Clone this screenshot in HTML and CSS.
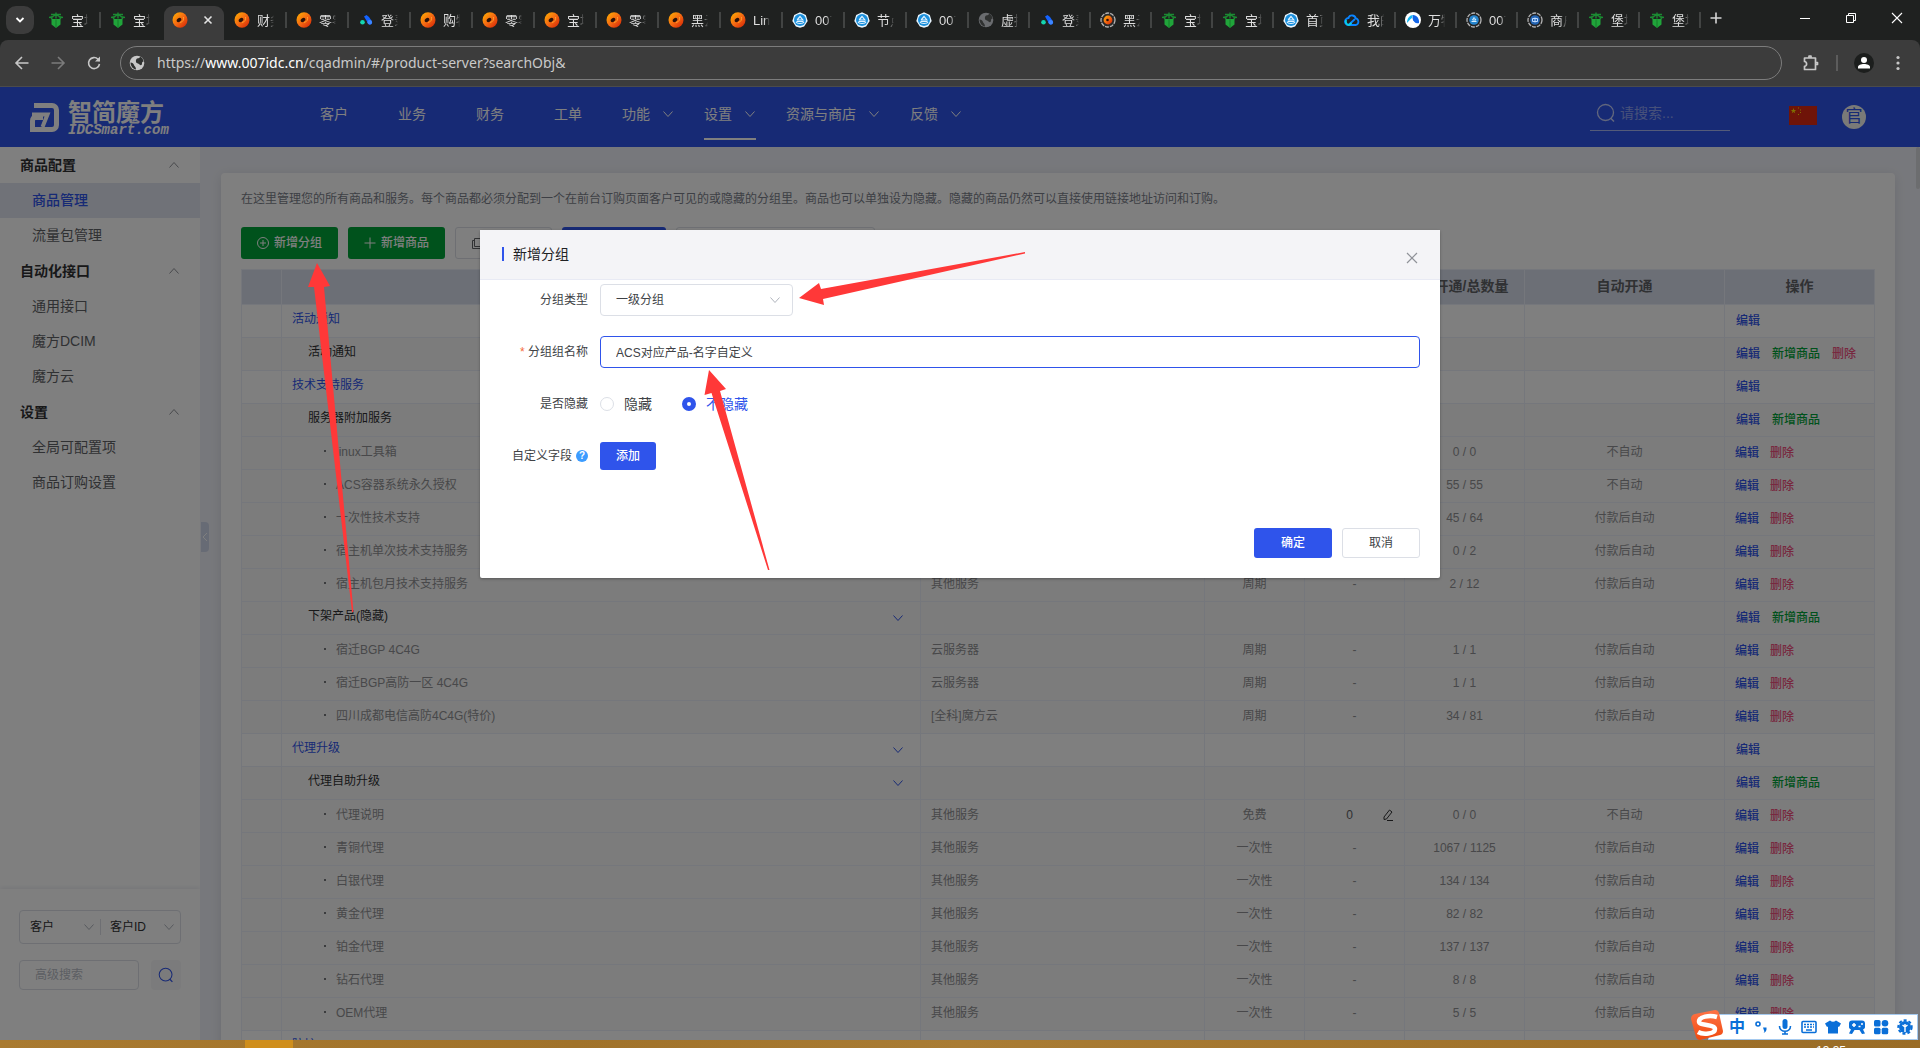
FILE: index.html
```html
<!DOCTYPE html>
<html lang="zh-CN">
<head>
<meta charset="utf-8">
<title>商品管理</title>
<link rel="stylesheet" href="styles.css">
</head>
<body>
<svg class="defs" aria-hidden="true">
  <defs>
    <linearGradient id="og" x1="0" y1="0" x2="1" y2="1"><stop offset="0" stop-color="#ffb400"/><stop offset=".5" stop-color="#f56a12"/><stop offset="1" stop-color="#d01f05"/></linearGradient>
    <linearGradient id="sg" x1="0" y1="0" x2="0" y2="1"><stop offset="0" stop-color="#ff7346"/><stop offset="1" stop-color="#f04a10"/></linearGradient>
  </defs>
  <symbol id="bt" viewBox="0 0 16 16"><path d="M3.500 7h9v5.500L8 16l-4.500-3.500z" fill="#20a53a"/><path d="M8 7.500v8" stroke="#167a2a"/><path d="M1 5.500C3 5.500 5 5 8 2.500c3 2.500 5 3 7 3M3 2.500h10M8 .5v6M3 7l2-2M13 7l-2-2" stroke="#1b8a32" stroke-width="1.400" fill="none"/></symbol>
  <symbol id="orb" viewBox="0 0 16 16"><ellipse cx="8" cy="8" rx="7.500" ry="7.800" fill="url(#og)"/><ellipse cx="7" cy="8" rx="2.600" ry="1.900" transform="rotate(-35 7 8)" fill="#2a1208"/><path d="M8 10.500c3-.5 4-3 3.500-5.500" stroke="#ffa02a" fill="none"/></symbol>
  <symbol id="tri" viewBox="0 0 16 16"><path d="M6 4.500L8.500 3 11 5l3 4.500a2.200 2.200 0 0 1-3.500 2.500z" fill="#1463ff"/><circle cx="11.700" cy="10.300" r="2.300" fill="#3e86ff"/><circle cx="4.500" cy="10.300" r="2.300" fill="#13d6b0"/></symbol>
  <symbol id="hex" viewBox="0 0 16 16"><path d="M8 .3l5.800 2.600 1.900 6-3.600 5.700-4.100 1.200-4.100-1.200L.3 8.900l1.900-6z" fill="#e9f6ff"/><circle cx="8" cy="8" r="6" fill="#1a8fdc"/><path d="M4 10c1 2 7 2 8 0M4.500 9.500h7M5.500 7.500l2.500-3 2.800 3.500H5.500z" stroke="#dff2ff" stroke-width="1.200" fill="none"/></symbol>
  <symbol id="globe" viewBox="0 0 16 16"><circle cx="8" cy="8" r="7.300" fill="currentColor"/><path d="M8 3.500c2 0 3-.8 3-2 2 1 3.300 2.700 3.600 5-1 0-1.600.8-1.600 2 0 2-1.500 2-2.500 1-1-1.200-3.500-1-3.500-2.500S6.500 5 8 3.500zM1.500 7.500c2 0 3 1 3.500 2.500s2 1.500 2 4.500c-3-.5-5.500-3.500-5.500-7z" fill="#2f3130"/></symbol>
  <symbol id="ringo" viewBox="0 0 16 16"><circle cx="8" cy="8" r="7" fill="#2a2a2a" stroke="#b5b5b5" stroke-width="1.300" stroke-dasharray="4 1"/><circle cx="8" cy="8" r="4.400" fill="url(#og)"/><circle cx="7.500" cy="8" r="1.300" fill="#2a1208"/></symbol>
  <symbol id="ringb" viewBox="0 0 16 16"><circle cx="8" cy="8" r="7" fill="#222" stroke="#b5b5b5" stroke-width="1.300" stroke-dasharray="4 1"/><circle cx="8" cy="8" r="4.800" fill="#2686cf"/><path d="M5.500 9.500h5M6.500 8L8 5.500 10 8z" stroke="#d8efff" fill="none"/></symbol>
  <symbol id="ringc" viewBox="0 0 16 16"><circle cx="8" cy="8" r="7" fill="#222" stroke="#b5b5b5" stroke-width="1.300" stroke-dasharray="4 1"/><circle cx="8" cy="8" r="4.800" fill="#2465b4"/><path d="M5.500 6.500h5v3h-5zM8 5.500v5" stroke="#bcd9ff" fill="none"/></symbol>
  <symbol id="cloud" viewBox="0 0 16 16"><path d="M5 13a3.500 3.500 0 1 1 .5-6.800M4.500 13L11 7M4.500 5.500a4 4 0 0 1 7.300.8A3.500 3.500 0 0 1 12 13H5.500" stroke="#0a84ff" stroke-width="1.800" fill="none"/><path d="M2.300 8A3.300 3.300 0 0 0 5 13l2.500-2" stroke="#08d1e6" stroke-width="1.800" fill="none"/></symbol>
  <symbol id="wan" viewBox="0 0 16 16"><circle cx="8" cy="8" r="8" fill="#fff"/><path d="M2 11C2 6 5 3 8 3l-1 3C5 7 4 9 2 11z" fill="#15b8f5"/><path d="M8 3c4 0 6.500 4 6 8-3 1-6-1-6.500-5z" fill="#1264e8"/></symbol>
  <symbol id="down" viewBox="0 0 12 12"><path d="M1.500 3.500L6 8.500l4.500-5" fill="none" stroke="currentColor"/></symbol>
  <symbol id="up" viewBox="0 0 12 12"><path d="M1.500 8.500L6 3.500l4.500 5" fill="none" stroke="currentColor"/></symbol>
  <symbol id="find" viewBox="0 0 20 20"><circle cx="9.500" cy="9.500" r="8" fill="none" stroke="currentColor" stroke-width="1.300"/><path d="M14.500 15l3.500 3.500" stroke="currentColor" stroke-width="1.500"/></symbol>
</svg>

<div class="browser">
  <header class="strip">
    <button class="tabsearch" aria-label="搜索标签页"><svg viewBox="0 0 12 12" width="12" height="12"><path d="M2.500 4L6 7.500 9.500 4" fill="none" stroke="#fff" stroke-width="1.800"/></svg></button>
    <nav class="tabs">
      <a class="tab" href="#"><svg class="fav"><use href="#bt"/></svg><span>宝塔</span></a>
      <a class="tab nosep" href="#"><svg class="fav"><use href="#bt"/></svg><span>宝塔</span></a>
      <a class="tab active" href="#"><svg class="fav"><use href="#orb"/></svg><svg class="tabx" viewBox="0 0 10 10"><path d="M1.500 1.500l7 7m0-7l-7 7" stroke="#e3e3e3" stroke-width="1.600"/></svg></a>
      <a class="tab" href="#"><svg class="fav"><use href="#orb"/></svg><span>财务</span></a>
      <a class="tab" href="#"><svg class="fav"><use href="#orb"/></svg><span>零零</span></a>
      <a class="tab" href="#"><svg class="fav"><use href="#tri"/></svg><span>登录</span></a>
      <a class="tab" href="#"><svg class="fav"><use href="#orb"/></svg><span>购物</span></a>
      <a class="tab" href="#"><svg class="fav"><use href="#orb"/></svg><span>零零</span></a>
      <a class="tab" href="#"><svg class="fav"><use href="#orb"/></svg><span>宝塔</span></a>
      <a class="tab" href="#"><svg class="fav"><use href="#orb"/></svg><span>零零</span></a>
      <a class="tab" href="#"><svg class="fav"><use href="#orb"/></svg><span>黑云</span></a>
      <a class="tab" href="#"><svg class="fav"><use href="#orb"/></svg><span>Lin</span></a>
      <a class="tab" href="#"><svg class="fav"><use href="#hex"/></svg><span>007</span></a>
      <a class="tab" href="#"><svg class="fav"><use href="#hex"/></svg><span>节点</span></a>
      <a class="tab" href="#"><svg class="fav"><use href="#hex"/></svg><span>007</span></a>
      <a class="tab" href="#"><svg class="fav dim"><use href="#globe"/></svg><span>虚拟</span></a>
      <a class="tab" href="#"><svg class="fav"><use href="#tri"/></svg><span>登录</span></a>
      <a class="tab" href="#"><svg class="fav"><use href="#ringo"/></svg><span>黑云</span></a>
      <a class="tab" href="#"><svg class="fav"><use href="#bt"/></svg><span>宝塔</span></a>
      <a class="tab" href="#"><svg class="fav"><use href="#bt"/></svg><span>宝塔</span></a>
      <a class="tab" href="#"><svg class="fav"><use href="#hex"/></svg><span>首页</span></a>
      <a class="tab" href="#"><svg class="fav"><use href="#cloud"/></svg><span>我的</span></a>
      <a class="tab" href="#"><svg class="fav"><use href="#wan"/></svg><span>万物</span></a>
      <a class="tab" href="#"><svg class="fav"><use href="#ringb"/></svg><span>007</span></a>
      <a class="tab" href="#"><svg class="fav"><use href="#ringc"/></svg><span>商户</span></a>
      <a class="tab" href="#"><svg class="fav"><use href="#bt"/></svg><span>堡塔</span></a>
      <a class="tab" href="#"><svg class="fav"><use href="#bt"/></svg><span>堡塔</span></a>
    </nav>
    <button class="newtab" aria-label="新标签页"><svg viewBox="0 0 12 12" width="12" height="12"><path d="M6 .5v11M.5 6h11" stroke="#d5d5d5" stroke-width="1.600"/></svg></button>
    <div class="winctl">
      <button aria-label="最小化"><svg viewBox="0 0 12 12" width="12" height="12"><path d="M1 6.500h10" stroke="#fff"/></svg></button>
      <button aria-label="还原"><svg viewBox="0 0 12 12" width="12" height="12"><path d="M1.500 3.500h7v7h-7zM3.500 3.500v-2h7v7h-2" fill="none" stroke="#fff"/></svg></button>
      <button aria-label="关闭"><svg viewBox="0 0 12 12" width="12" height="12"><path d="M1 1l10 10M11 1L1 11" stroke="#fff" stroke-width="1.100"/></svg></button>
    </div>
  </header>
  <div class="toolbar">
    <button class="tool" aria-label="后退"><svg viewBox="0 0 16 16" width="16" height="16"><path d="M14.500 8H2.500M8 2L2 8l6 6" fill="none" stroke="#c7c7c7" stroke-width="1.600"/></svg></button>
    <button class="tool" aria-label="前进"><svg viewBox="0 0 16 16" width="16" height="16"><path d="M1.500 8h12M8 2l6 6-6 6" fill="none" stroke="#7b7b7b" stroke-width="1.600"/></svg></button>
    <button class="tool" aria-label="重新加载"><svg viewBox="0 0 16 16" width="16" height="16"><path d="M13.500 9A5.500 5.500 0 1 1 12 4.200L13.500 6" fill="none" stroke="#c7c7c7" stroke-width="1.600"/><path d="M14 1.500v5H9z" fill="#c7c7c7"/></svg></button>
    <div class="urlbar"><svg class="site"><use href="#globe"/></svg><span>https://<b>www.007idc.cn</b>/cqadmin/#/product-server?searchObj&amp;</span></div>
    <div class="tools">
      <svg viewBox="0 0 18 18" width="18" height="18"><path d="M2.500 4h11v11.500h-11v-3.200c2.800 0 2.800-4.800 0-4.800zM13.500 8.500h2v2h-2M7 4V2h2v2" fill="none" stroke="#c7c7c7" stroke-width="1.700" stroke-linejoin="round"/></svg>
      <i></i>
      <svg viewBox="0 0 20 20" width="20" height="20"><circle cx="10" cy="10" r="10" fill="#1c1e1d"/><circle cx="10" cy="7" r="3" fill="#fff"/><path d="M4 15.500V14c0-4 12-4 12 0v1.500z" fill="#fff"/></svg>
      <svg viewBox="0 0 4 16" width="4" height="16" fill="#c7c7c7"><circle cx="2" cy="2.500" r="1.600"/><circle cx="2" cy="8" r="1.600"/><circle cx="2" cy="13.500" r="1.600"/></svg>
    </div>
  </div>

  <div class="app">
    <header class="top">
      <a class="logo" href="#">
        <svg viewBox="0 0 29 29" width="29" height="29"><path d="M4 2.500h18a4.500 4.500 0 0 1 4.500 4.500v15a4.500 4.500 0 0 1-4.500 4.500H2.500V18c0-2 1-3.500 3-3.500H13" fill="none" stroke="#fff" stroke-width="5"/><path d="M0 9h14a4 4 0 0 1 4 4.500L14 22H8.500l4-9H0" fill="none"/><path d="M2 11.500h15.500L12.500 24" fill="none" stroke="#fff" stroke-width="4"/></svg>
        <span class="brand"><strong>智简魔方</strong><em>IDCSmart.com</em></span>
      </a>
      <nav class="menu">
        <a href="#">客户</a><a href="#">业务</a><a href="#">财务</a><a href="#">工单</a>
        <a class="drop" href="#">功能<svg><use href="#down"/></svg></a>
        <a class="drop on" href="#">设置<svg><use href="#down"/></svg></a>
        <a class="drop" href="#">资源与商店<svg><use href="#down"/></svg></a>
        <a class="drop" href="#">反馈<svg><use href="#down"/></svg></a>
      </nav>
      <label class="search"><svg><use href="#find"/></svg><input type="text" placeholder="请搜索..." aria-label="搜索"></label>
      <svg class="flag" viewBox="0 0 28 19" width="28" height="19"><path d="M0 0h28v19H0z" fill="#de2910"/><path d="M4.500 2l.7 2h2L5.600 5.200l.6 2-1.700-1.200-1.700 1.200.6-2L1.800 4h2z" fill="#ffde00"/><path d="M9 1.500h1v1H9zM11 3.500h1v1h-1zM11 6h1v1h-1zM9 8h1v1H9z" fill="#ffde00"/></svg>
      <span class="avatar">官</span>
    </header>
    <div class="body">
      <aside class="side">
        <nav>
          <h3>商品配置<svg><use href="#up"/></svg></h3>
          <a class="on" href="#">商品管理</a>
          <a href="#">流量包管理</a>
          <h3>自动化接口<svg><use href="#up"/></svg></h3>
          <a href="#">通用接口</a>
          <a href="#">魔方DCIM</a>
          <a href="#">魔方云</a>
          <h3>设置<svg><use href="#up"/></svg></h3>
          <a href="#">全局可配置项</a>
          <a href="#">商品订购设置</a>
        </nav>
        <div class="advanced">
          <div class="pair">
            <div class="pick"><select aria-label="类型"><option>客户</option></select><svg><use href="#down"/></svg></div>
            <div class="pick"><select aria-label="字段"><option>客户ID</option></select><svg><use href="#down"/></svg></div>
          </div>
          <div class="query"><input type="text" placeholder="高级搜索" aria-label="高级搜索"><button aria-label="搜索"><svg><use href="#find"/></svg></button></div>
        </div>
      </aside>
      <main class="main">
        <button class="fold" aria-label="收起"><svg viewBox="0 0 8 12" width="8" height="12"><path d="M6 2L2 6l4 4" fill="none" stroke="#fff"/></svg></button>
        <i class="thumb"></i>
        <section class="card">
          <p class="note">在这里管理您的所有商品和服务。每个商品都必须分配到一个在前台订购页面客户可见的或隐藏的分组里。商品也可以单独设为隐藏。隐藏的商品仍然可以直接使用链接地址访问和订购。</p>
          <div class="actions">
            <button class="green"><svg viewBox="0 0 12 12" width="12" height="12"><circle cx="6" cy="6" r="5.500" fill="none" stroke="#fff"/><path d="M6 3v6M3 6h6" stroke="#fff"/></svg>新增分组</button>
            <button class="green"><svg viewBox="0 0 12 12" width="12" height="12"><path d="M6 .5v11M.5 6h11" stroke="#fff"/></svg>新增商品</button>
            <button class="plain" aria-label="复制"><svg viewBox="0 0 12 12" width="12" height="12"><path d="M3.500 1.500h8v8h-8zM3.500 3.500h-2v8h8v-2" fill="none" stroke="#606266"/></svg></button>
            <button class="blue" aria-label="搜索"></button>
            <input class="filter" type="text" aria-label="关键字">
          </div>
          <table class="list">
            <colgroup><col class="c1"><col><col class="c3"><col class="c4"><col class="c4"><col class="c6"><col class="c7"><col class="c8"></colgroup>
            <thead><tr><th></th><th></th><th></th><th></th><th></th><th>已开通/总数量</th><th>自动开通</th><th>操作</th></tr></thead>
            <tbody>
              <tr class="g1"><td></td><td><span>活动通知</span></td><td></td><td></td><td></td><td></td><td></td><td><a class="e" href="#">编辑</a></td></tr>
              <tr class="g2"><td></td><td><span>活动通知</span></td><td></td><td></td><td></td><td></td><td></td><td><a class="e" href="#">编辑</a><a class="n" href="#">新增商品</a><a class="d" href="#">删除</a></td></tr>
              <tr class="g1"><td></td><td><span>技术支持服务</span></td><td></td><td></td><td></td><td></td><td></td><td><a class="e" href="#">编辑</a></td></tr>
              <tr class="g2"><td></td><td><span>服务器附加服务</span></td><td></td><td></td><td></td><td></td><td></td><td><a class="e" href="#">编辑</a><a class="n" href="#">新增商品</a></td></tr>
              <tr class="p"><td></td><td>linux工具箱</td><td></td><td></td><td></td><td>0 / 0</td><td>不自动</td><td><a class="e" href="#">编辑</a><a class="d" href="#">删除</a></td></tr>
              <tr class="p"><td></td><td>ACS容器系统永久授权</td><td></td><td></td><td></td><td>55 / 55</td><td>不自动</td><td><a class="e" href="#">编辑</a><a class="d" href="#">删除</a></td></tr>
              <tr class="p"><td></td><td>一次性技术支持</td><td></td><td></td><td></td><td>45 / 64</td><td>付款后自动</td><td><a class="e" href="#">编辑</a><a class="d" href="#">删除</a></td></tr>
              <tr class="p"><td></td><td>宿主机单次技术支持服务</td><td></td><td></td><td></td><td>0 / 2</td><td>付款后自动</td><td><a class="e" href="#">编辑</a><a class="d" href="#">删除</a></td></tr>
              <tr class="p"><td></td><td>宿主机包月技术支持服务</td><td>其他服务</td><td>周期</td><td>-</td><td>2 / 12</td><td>付款后自动</td><td><a class="e" href="#">编辑</a><a class="d" href="#">删除</a></td></tr>
              <tr class="g2"><td></td><td><span>下架产品(隐藏)</span><svg><use href="#down"/></svg></td><td></td><td></td><td></td><td></td><td></td><td><a class="e" href="#">编辑</a><a class="n" href="#">新增商品</a></td></tr>
              <tr class="p"><td></td><td>宿迁BGP 4C4G</td><td>云服务器</td><td>周期</td><td>-</td><td>1 / 1</td><td>付款后自动</td><td><a class="e" href="#">编辑</a><a class="d" href="#">删除</a></td></tr>
              <tr class="p"><td></td><td>宿迁BGP高防一区 4C4G</td><td>云服务器</td><td>周期</td><td>-</td><td>1 / 1</td><td>付款后自动</td><td><a class="e" href="#">编辑</a><a class="d" href="#">删除</a></td></tr>
              <tr class="p"><td></td><td>四川成都电信高防4C4G(特价)</td><td>[全科]魔方云</td><td>周期</td><td>-</td><td>34 / 81</td><td>付款后自动</td><td><a class="e" href="#">编辑</a><a class="d" href="#">删除</a></td></tr>
              <tr class="g1"><td></td><td><span>代理升级</span><svg><use href="#down"/></svg></td><td></td><td></td><td></td><td></td><td></td><td><a class="e" href="#">编辑</a></td></tr>
              <tr class="g2"><td></td><td><span>代理自助升级</span><svg><use href="#down"/></svg></td><td></td><td></td><td></td><td></td><td></td><td><a class="e" href="#">编辑</a><a class="n" href="#">新增商品</a></td></tr>
              <tr class="p"><td></td><td>代理说明</td><td>其他服务</td><td>免费</td><td><span class="stock">0<svg viewBox="0 0 12 12"><path d="M2 8l5.500-7 2.500 2-5.500 7-2.500.5zM5 11.500h6" fill="none" stroke="#303133"/></svg></span></td><td>0 / 0</td><td>不自动</td><td><a class="e" href="#">编辑</a><a class="d" href="#">删除</a></td></tr>
              <tr class="p"><td></td><td>青铜代理</td><td>其他服务</td><td>一次性</td><td>-</td><td>1067 / 1125</td><td>付款后自动</td><td><a class="e" href="#">编辑</a><a class="d" href="#">删除</a></td></tr>
              <tr class="p"><td></td><td>白银代理</td><td>其他服务</td><td>一次性</td><td>-</td><td>134 / 134</td><td>付款后自动</td><td><a class="e" href="#">编辑</a><a class="d" href="#">删除</a></td></tr>
              <tr class="p"><td></td><td>黄金代理</td><td>其他服务</td><td>一次性</td><td>-</td><td>82 / 82</td><td>付款后自动</td><td><a class="e" href="#">编辑</a><a class="d" href="#">删除</a></td></tr>
              <tr class="p"><td></td><td>铂金代理</td><td>其他服务</td><td>一次性</td><td>-</td><td>137 / 137</td><td>付款后自动</td><td><a class="e" href="#">编辑</a><a class="d" href="#">删除</a></td></tr>
              <tr class="p"><td></td><td>钻石代理</td><td>其他服务</td><td>一次性</td><td>-</td><td>8 / 8</td><td>付款后自动</td><td><a class="e" href="#">编辑</a><a class="d" href="#">删除</a></td></tr>
              <tr class="p"><td></td><td>OEM代理</td><td>其他服务</td><td>一次性</td><td>-</td><td>5 / 5</td><td>付款后自动</td><td><a class="e" href="#">编辑</a><a class="d" href="#">删除</a></td></tr>
              <tr class="g1"><td></td><td><span>防护</span></td><td></td><td></td><td></td><td></td><td></td><td></td></tr>
            </tbody>
          </table>
        </section>
      </main>
    </div>

    <div class="mask">
      <form class="modal">
        <header><h2>新增分组</h2><button type="button" class="close" aria-label="关闭"><svg viewBox="0 0 12 12" width="12" height="12"><path d="M1 1l10 10M11 1L1 11" stroke="#909399" stroke-width="1.200"/></svg></button></header>
        <div class="fields">
          <div class="field"><label for="kind">分组类型</label><div class="pick kind"><select id="kind"><option>一级分组</option></select><svg><use href="#down"/></svg></div></div>
          <div class="field"><label for="name"><i>*</i> 分组组名称</label><input id="name" type="text" value="ACS对应产品-名字自定义"></div>
          <div class="field" role="radiogroup" aria-labelledby="hide"><span class="label" id="hide">是否隐藏</span><label class="opt"><input type="radio" name="hide">隐藏</label><label class="opt"><input type="radio" name="hide" checked>不隐藏</label></div>
          <div class="field"><span class="label custom">自定义字段<b class="help">?</b></span><button type="button" class="add">添加</button></div>
        </div>
        <footer><button type="button" class="ok">确定</button><button type="button" class="cancel">取消</button></footer>
      </form>
    </div>
  </div>

  <footer class="taskbar"><i></i><time>13:35</time></footer>
</div>

<svg class="marks" width="1100" height="640" viewBox="0 0 1100 640" fill="#ff3838" aria-hidden="true">
  <path d="M317 263l13 23-6 1 29.500 325h-1.500L314 287h-6z"/>
  <path d="M799 298l20-15 2 6 204-37v1.500L823 299l1 6z"/>
  <path d="M709 370l17 19-6 2 49.500 179h-1.500L711.500 393l-7 2z"/>
</svg>

<div class="ime">
  <svg class="sogou" viewBox="0 0 32 30" width="32" height="30"><path d="M4 4l20-4q3 0 4 3l4 18q0 3-3 4L9 30q-3 0-4-3L0 9q0-4 4-5z" fill="url(#sg)"/><path d="M26 7C18 4.500 8 7 8 11.500S24 14 24 19 12 25 7 22" fill="none" stroke="#fff" stroke-width="4.500"/></svg>
  <b>中</b>
  <svg viewBox="0 0 16 16"><circle cx="5" cy="5" r="2" fill="none" stroke="#0a6fd8" stroke-width="1.600"/><path d="M10 8.500h3.500c.5 3-1 5-3 5.500 1-1 1-2 .5-2.500z" fill="#0a6fd8"/></svg>
  <svg viewBox="0 0 16 16"><rect x="5.500" y="0" width="5" height="10" rx="2.500" fill="#0a6fd8"/><path d="M2.500 7c0 7 11 7 11 0M8 12v3M5 15h6" fill="none" stroke="#0a6fd8" stroke-width="1.600"/></svg>
  <svg viewBox="0 0 16 16"><rect x="1" y="2.500" width="14" height="11" rx="1" fill="none" stroke="#0a6fd8" stroke-width="1.600"/><path d="M3 5.500h10M3 8h10" stroke="#0a6fd8" stroke-width="1.600" stroke-dasharray="2 1"/><path d="M5 11h6" stroke="#0a6fd8" stroke-width="1.500"/></svg>
  <svg viewBox="0 0 16 16"><path d="M5 1.500q3 2.500 6 0l5 3-2 3.500-1-.5v7H3v-7L2 8 0 4.500z" fill="#0a6fd8"/></svg>
  <svg viewBox="0 0 16 16"><path d="M3 1.500h10a3 3 0 0 1 3 3v4a3 3 0 0 1-2 2l2 4-3 .5-2.500-4h-5L3 15l-3-.5 2-4a3 3 0 0 1-2-2v-4a3 3 0 0 1 3-3z" fill="#0a6fd8"/><path d="M3 6h4M5 4v4M9.500 7.500h2M12 5h2" stroke="#fff" stroke-width="1.500"/></svg>
  <svg viewBox="0 0 16 16" fill="#0a6fd8"><rect x="1" y="1" width="6.500" height="6.500" rx="1.500"/><circle cx="12" cy="4.300" r="3.300"/><rect x="1" y="8.700" width="6.500" height="6.500" rx="1.500"/><rect x="8.700" y="8.700" width="6.500" height="6.500" rx="1.500"/></svg>
  <svg viewBox="0 0 16 16"><circle cx="8" cy="8" r="6" fill="#0a6fd8"/><circle cx="8" cy="8" r="6.700" fill="none" stroke="#0a6fd8" stroke-width="2" stroke-dasharray="3 2"/><path d="M8 13V8M8 8l-2.500-2M8 8l2.500-2M8 7V5" stroke="#fff" stroke-width="1.400"/></svg>
</div>
</body>
</html>
```
FILE: styles.css
```css
* { box-sizing: border-box; }
body {
  margin: 0;
  font: 12px/20px "Liberation Sans", "Noto Sans CJK SC", sans-serif;
  color: #606266;
  overflow: hidden;
}
button, input, select { font: inherit; color: inherit; margin: 0; padding: 0; border: 0; background: none; outline: 0; }
select { appearance: none; width: 100%; }
a { color: inherit; text-decoration: none; }
h2, h3, p { margin: 0; }
.defs { position: absolute; width: 0; height: 0; }

.browser { display: grid; grid-template-rows: 40px 47px minmax(0, 1fr) 8px; height: 100vh; background: #1f2120; }

/* Tab strip */
.strip { display: flex; align-items: stretch; color: #dedede; }
.tabsearch { width: 28px; height: 28px; margin: 6px; border-radius: 10px; background: #3c3c3c; align-self: flex-start; display: grid; place-items: center; }
.tabs { flex: 1; display: grid; grid-template-columns: repeat(15, minmax(0, 62fr)) repeat(12, minmax(0, 61fr)); }
.tab { position: relative; display: flex; align-items: center; gap: 7px; padding-left: 8px; overflow: hidden; }
.tab span { width: 17px; overflow: hidden; white-space: nowrap; mask-image: linear-gradient(90deg, #000 65%, transparent); font-size: 13px; padding-top: 1px; }
.tab:not(.active):not(.nosep)::after { content: ""; position: absolute; right: 1px; top: 12px; width: 2px; height: 16px; background: #424443; }
.fav { width: 16px; height: 16px; flex: none; }
.fav.dim { color: #6a6c6f; }
.tab.active { margin: 6px 2px 0 0; padding: 0 11px 6px 8px; background: #3c3c3c; border-radius: 9px 9px 0 0; justify-content: space-between; }
.tabx { width: 10px; height: 10px; }
.newtab { width: 28px; margin-right: 52px; }
.winctl { display: flex; }
.winctl button { width: 46px; }

/* Toolbar */
.toolbar { display: flex; align-items: center; gap: 20px; padding: 0 20px 0 14px; background: #3c3c3c; border-radius: 8px 8px 0 0; border-bottom: 1px solid #4b4b4b; }
.tool { width: 16px; height: 16px; display: grid; }
.urlbar { flex: 1; height: 34px; margin-left: -2px; display: flex; align-items: center; gap: 12px; padding: 0 8px; border: 1px solid #7c7c7c; border-radius: 17px; color: #c9c9c9; font: 14px/20px "Noto Sans", "Open Sans", sans-serif; }
.urlbar b { font-weight: 400; color: #fff; }
.site { width: 16px; height: 16px; color: #c7c7c7; }
.tools { display: flex; align-items: center; gap: 16px; }
.tools i { width: 2px; height: 16px; background: #5c5c5c; }
.tools svg:last-child { margin-left: 6px; }

/* Application */
.app { position: relative; display: flex; flex-direction: column; overflow: hidden; background: #fff; }
.top { flex: none; height: 60px; display: flex; align-items: center; padding: 0 54px 0 30px; background: #2f54eb; color: #fff; font-size: 14px; }
.logo { display: flex; align-items: center; gap: 9px; width: 265px; }
.brand { display: flex; flex-direction: column; }
.brand strong { font: 700 24px/26px "Noto Sans CJK SC", sans-serif; }
.brand em { font: italic 700 14px/12px "Liberation Mono", monospace; }
.menu { flex: 1; display: flex; height: 60px; }
.menu a { padding: 17px 25px 0; position: relative; }
.menu .drop { padding: 17px 15px 0; display: flex; gap: 12px; }
.menu svg { width: 12px; height: 12px; margin-top: 4px; }
.menu .on::after { content: ""; position: absolute; left: 15px; right: 15px; top: 51px; height: 2px; background: #fff; }
.search { width: 140px; height: 36px; margin-top: -8px; display: flex; align-items: center; gap: 4px; padding: 0 6px; border-bottom: 1px solid #a9b6f2; align-self: center; }
.search svg { width: 20px; height: 20px; flex: none; color: #c5cffa; }
.search input { width: 100px; }
.search input::placeholder { color: #8fa3f5; }
.flag { margin: 0 25px 4px 59px; }
.avatar { width: 24px; height: 24px; border-radius: 50%; background: #f4f4f0; color: #2f54eb; font-size: 17px; line-height: 24px; text-align: center; }

.body { flex: 1; min-height: 0; display: flex; }
.side { flex: none; width: 200px; display: flex; flex-direction: column; justify-content: space-between; font-size: 14px; background: #fff; }
.side h3 { display: flex; justify-content: space-between; align-items: center; height: 36px; padding: 0 20px; font-size: 14px; color: #303133; }
.side h3 svg { width: 12px; height: 12px; color: #909399; }
.side a { display: block; height: 35px; padding-left: 32px; line-height: 35px; color: #606266; }
.side .on { background: #e0e4f0; color: #2f54eb; font-weight: 500; }
.advanced { padding: 21px 19px 50px; font-size: 12px; box-shadow: 0 -2px 4px #eff0f5; }
.pair { display: flex; height: 34px; border: 1px solid #dcdfe6; border-radius: 4px; color: #303133; }
.pick { position: relative; flex: 1; display: flex; align-items: center; padding-left: 10px; }
.pick + .pick::before { content: ""; position: absolute; left: 0; top: 8px; height: 16px; border-left: 1px solid #dcdfe6; }
.pick svg { position: absolute; right: 5px; width: 12px; height: 12px; color: #b0b4bd; pointer-events: none; }
.query { display: flex; justify-content: space-between; margin-top: 16px; }
.query input { width: 120px; height: 30px; padding: 0 15px; border: 1px solid #dcdfe6; border-radius: 4px; }
.query input::placeholder { color: #b9bdc6; }
.query button { width: 30px; height: 30px; border-radius: 4px; background: #f7f7f8; color: #2f54eb; display: grid; place-items: center; }
.query svg { width: 16px; height: 16px; }

.main { position: relative; flex: 1; min-width: 0; overflow: hidden; padding: 26px 25px 0 21px; background: #eff1f8; }
.fold { position: absolute; left: 1px; top: 375px; width: 8px; height: 30px; border-radius: 0 4px 4px 0; background: #cfd7ea; display: grid; place-items: center; }
.thumb { position: absolute; right: 0; top: 0; width: 4px; height: 42px; border-radius: 2px; background: #d9dade; }
.card { padding: 16px 20px; background: #fff; border-radius: 4px; box-shadow: 0 2px 12px rgba(0, 0, 0, .1); }
.note { color: #7b7f8a; }
.actions { display: flex; gap: 10px; margin: 18px 0 10px; }
.actions button { width: 97px; height: 32px; border-radius: 3px; display: flex; align-items: center; justify-content: center; gap: 5px; font-weight: 500; }
.actions .green { background: #01a539; color: #fff; }
.actions .plain { border: 1px solid #dcdfe6; justify-content: flex-start; padding-left: 15px; }
.actions .blue { width: 104px; background: #2f54eb; }
.filter { width: 199px; border: 1px solid #dcdfe6; border-radius: 3px; }

.list { width: 100%; table-layout: fixed; border-collapse: collapse; color: #909194; }
.c1 { width: 40px; } .c3 { width: 284px; } .c4 { width: 100px; } .c6 { width: 120px; } .c7 { width: 200px; } .c8 { width: 150px; }
.list th, .list td { border: 1px solid #ebeef8; padding: 0 0 2px; height: 33px; text-align: center; white-space: nowrap; }
.list th { height: 35px; background: #d8deed; font-size: 14px; font-weight: 700; color: #606266; }
.list td { background: #f8f8f8; }
.list td:nth-child(2) { text-align: left; padding-left: 54px; }
.list td:nth-child(3) { text-align: left; padding-left: 10px; }
.list td:nth-child(8) { text-align: left; padding: 0 0 0 11px; }
.list .p td:nth-child(8) { padding-left: 10px; }
.list .p td:nth-child(2)::before { content: ""; display: inline-block; width: 2px; height: 2px; margin: 0 10px 4px -12px; background: #77797d; }
.list .g1 td { background: #fff; }
.list .g1 td:nth-child(2) { padding: 0 0 0 10px; color: #2f54eb; }
.list .g2 td:nth-child(2) { padding: 0 0 0 26px; color: #303133; }
.list .g1 span, .list .g2 span { display: inline-block; padding-bottom: 4px; }
.list td:nth-child(2) svg { float: right; width: 12px; height: 12px; margin: 6px 16px 0 0; color: #2f54eb; }
.list a { margin-right: 12px; font-weight: 500; }
.list .p a { margin-right: 11px; }
.e { color: #2f54eb; } .n { color: #01a539; } .d { color: #f0507f; }
.stock { display: flex; align-items: center; justify-content: flex-end; gap: 29px; padding-right: 10px; color: #606266; }
.stock svg { width: 12px; height: 12px; }

/* Dialog */
.mask { position: absolute; inset: 0; background: rgba(0, 0, 0, .5); }
.modal { width: 50%; margin: 143px auto 0; background: #fff; border-radius: 2px; box-shadow: 0 1px 3px rgba(0, 0, 0, .3); color: #404246; }
.modal header { display: flex; justify-content: space-between; align-items: center; height: 50px; padding: 0 22px; background: #f4f4f7; border-bottom: 1px solid #e8eaf4; }
.modal h2 { display: flex; align-items: center; gap: 9px; margin-bottom: 2px; font-size: 14px; font-weight: 400; color: #202124; }
.modal h2::before { content: ""; width: 2px; height: 14px; background: #2f54eb; }
.close { width: 12px; height: 12px; margin-top: 6px; display: grid; }
.fields { display: grid; gap: 20px; padding: 4px 20px 0; }
.field { display: flex; align-items: center; height: 32px; }
.field > label:first-child, .label { width: 100px; padding-right: 12px; text-align: right; }
.field > label i { color: #f56c3c; font-style: normal; }
.field > input { flex: 1; height: 32px; padding: 0 15px 2px; border: 1px solid #2f54eb; border-radius: 4px; }
.field .kind { flex: 0 0 193px; height: 32px; padding-left: 15px; border: 1px solid #dcdfe6; border-radius: 4px; }
.kind svg { right: 11px; }
.opt { display: flex; align-items: center; gap: 10px; margin-right: 30px; padding-bottom: 1px; font-size: 14px; }
.opt input { appearance: none; width: 14px; height: 14px; border: 1px solid #dcdfe6; border-radius: 50%; }
.opt input:checked { border: 5px solid #2f54eb; }
.opt:has(:checked) { color: #2f54eb; }
.custom { display: flex; align-items: center; justify-content: flex-end; gap: 4px; }
.help { width: 12px; height: 12px; border-radius: 50%; background: #3c9cff; color: #fff; font-size: 10px; line-height: 12px; text-align: center; }
.add { width: 56px; height: 28px; border-radius: 3px; background: #2f54eb; color: #fff; font-weight: 500; }
.modal footer { display: flex; justify-content: flex-end; gap: 10px; padding: 56px 20px 20px; }
.modal footer button { width: 78px; height: 30px; border-radius: 3px; font-weight: 500; }
.ok { background: #2f54eb; color: #fff; }
.modal .cancel { border: 1px solid #dcdfe6; font-weight: 400; }

/* Desktop */
.taskbar { display: flex; justify-content: space-between; overflow: hidden; padding: 0 74px 0 245px; background: linear-gradient(90deg, #a97a30, #a0722a 30%, #a97c34 50%, #9a6c26); color: #fff; }
.taskbar i { width: 48px; background: #cf8e1c; }
.taskbar time { padding-top: 1px; font-size: 12px; }
.marks { position: absolute; left: 0; top: 0; pointer-events: none; }
.ime { position: absolute; right: 2px; bottom: 8px; display: flex; align-items: center; gap: 8px; height: 26px; padding: 0 4px 0 20px; background: #fff; border: 1px solid #a5c9ee; color: #0a6fd8; }
.ime svg { width: 16px; height: 16px; }
.ime b { width: 16px; font-size: 16px; }
.ime .sogou { position: absolute; left: -18px; top: -5px; width: 32px; height: 30px; }
```
